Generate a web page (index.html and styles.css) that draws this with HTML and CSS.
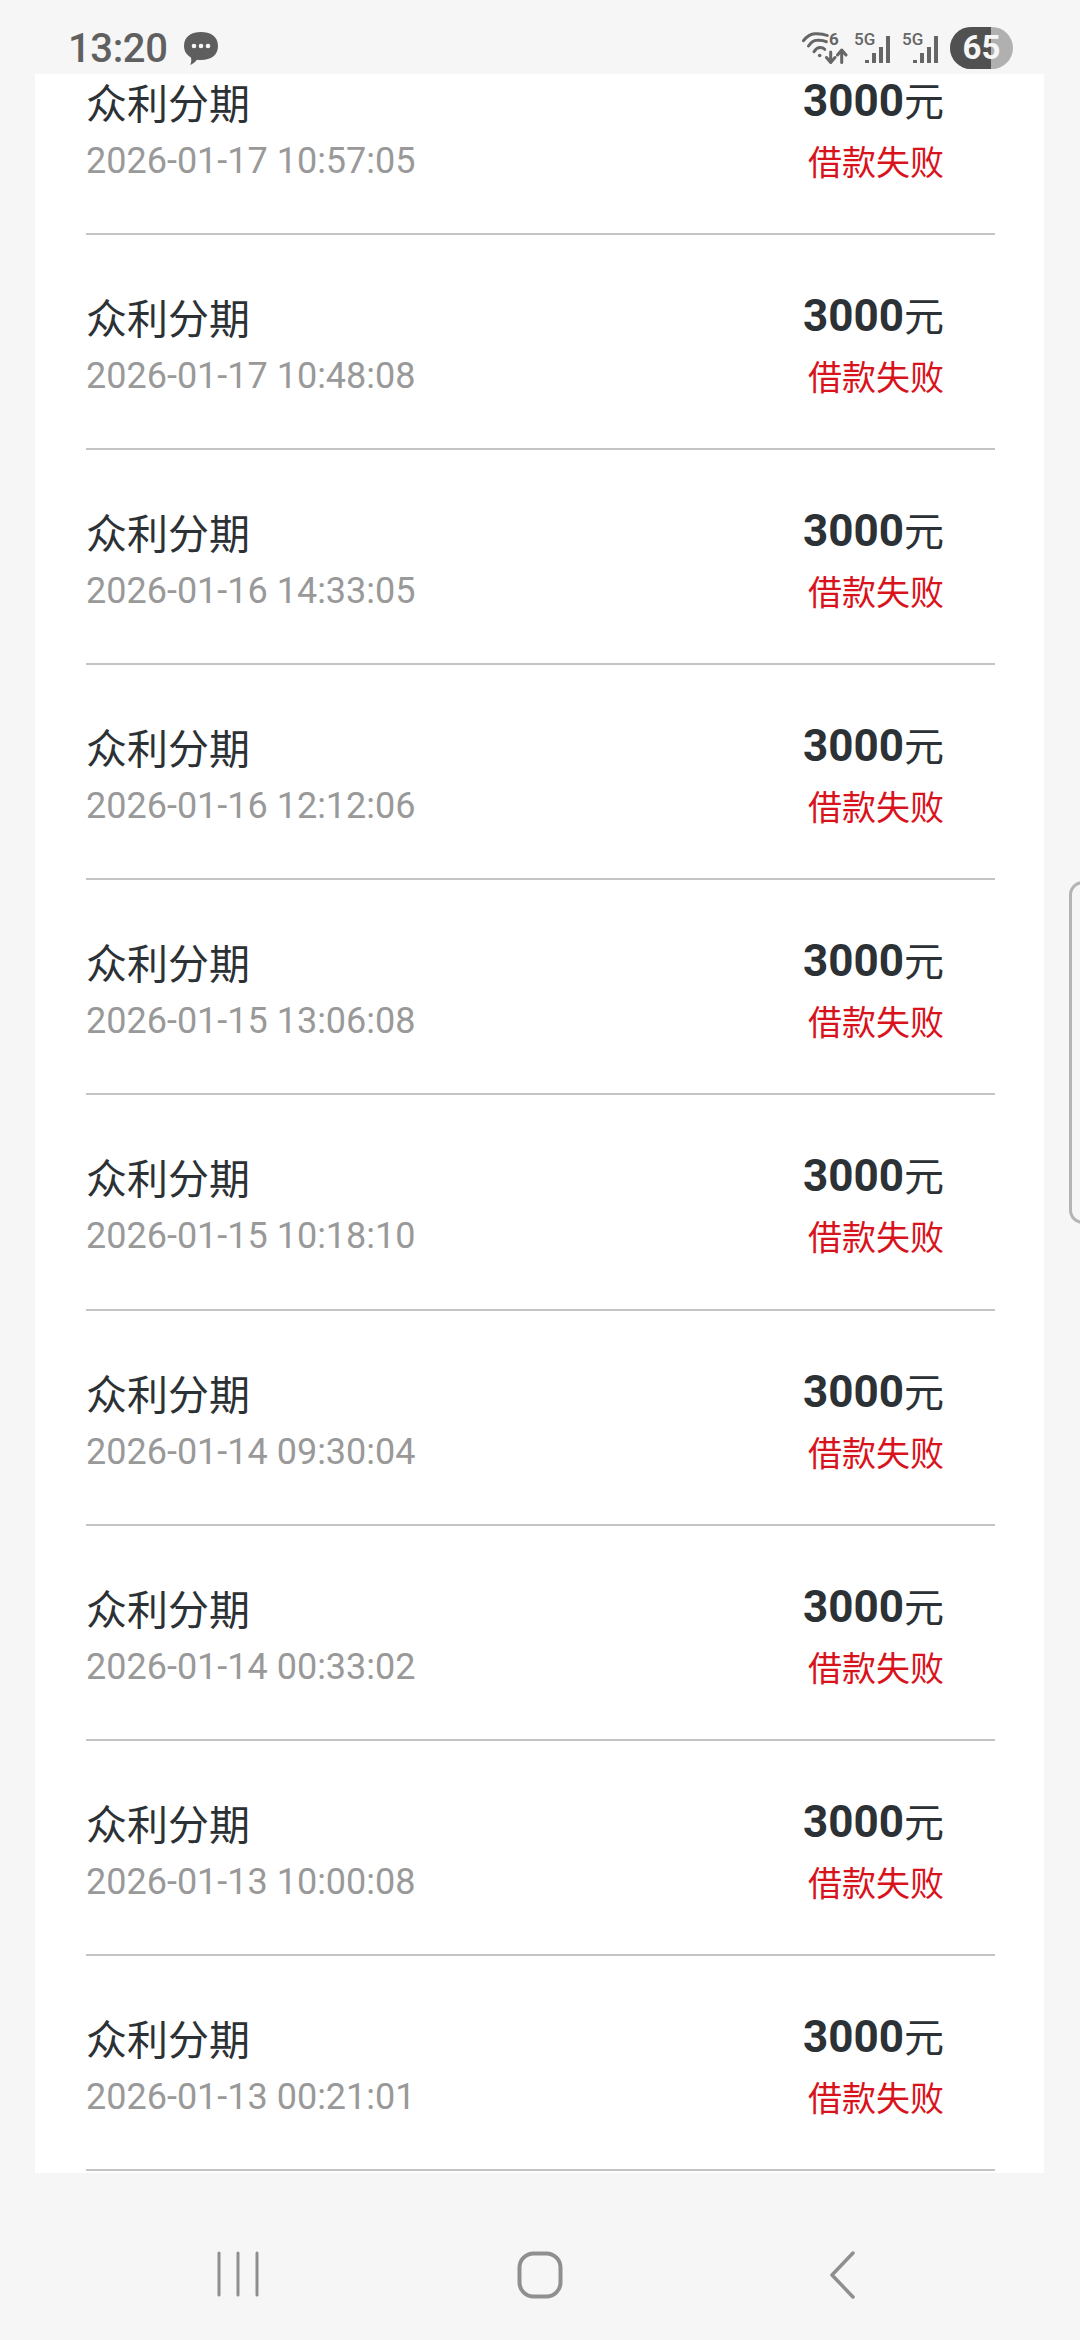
FILE: index.html
```html
<!DOCTYPE html>
<html lang="zh-CN">
<head>
<meta charset="utf-8">
<title>借款记录</title>
<link rel="stylesheet" href="styles.css">
</head>
<body>
<div class="screen">
  <header class="status">
    <div class="status-left">
      <span class="clock">13:20</span>
      <svg class="msg" width="36" height="36" viewBox="0 0 36 36"><path d="M18 1C27 1 35 5 35 15C35 24 28 29 18 29C16.500 29 15 29 14 28.800C12.500 31 10 33 7 34C8.500 31.500 8.500 29 8 26.500C3.500 24 1 20 1 15C1 5 9 1 18 1Z" fill="#5e5e5e"/><circle cx="11" cy="15" r="2.300" fill="#f6f6f6"/><circle cx="18" cy="15" r="2.300" fill="#f6f6f6"/><circle cx="25" cy="15" r="2.300" fill="#f6f6f6"/></svg>
    </div>
    <div class="status-right">
      <div class="wifi">
        <svg class="wifi-glyph" width="46" height="32" viewBox="0 0 46 32" fill="none" stroke="#666" stroke-width="3" stroke-linecap="round" stroke-linejoin="round"><path d="M1.500 8.700C5 4 9 1.800 13 1.700C18 1.500 22 2 25.300 3.500"/><path d="M6.500 14C9 10 12 8.300 15 8.200C18.500 8 22 8.500 24.300 9.700"/><path d="M12 19.700C14 16.500 16 15.500 18 15.500C20 15.500 21.500 16 22.700 17.300"/><circle cx="17.700" cy="23.500" r="1.800" fill="#666" stroke="none"/><path d="M28.700 20V30M24.500 25.500L28.700 30.500L33 25.500"/><path d="M39.700 30.500V18.500M35.500 23L39.700 18L44 23"/></svg>
        <span class="wifi-six">6</span>
      </div>
      <div class="signal">
        <span class="sig-label">5G</span>
        <div class="bars"><i class="b1"></i><i class="b2"></i><i class="b3"></i><i class="b4"></i></div>
      </div>
      <div class="signal">
        <span class="sig-label">5G</span>
        <div class="bars"><i class="b1"></i><i class="b2"></i><i class="b3"></i><i class="b4"></i></div>
      </div>
      <div class="battery"><div class="level"></div><span class="pct">65</span></div>
    </div>
  </header>
  <main class="card">
    <ul class="list">
      <li class="row"><div class="col"><span class="name">众利分期</span><span class="date">2026-01-17 10:57:05</span></div><div class="col end"><span class="amount"><b>3000</b>元</span><span class="state">借款失败</span></div></li>
      <li class="row"><div class="col"><span class="name">众利分期</span><span class="date">2026-01-17 10:48:08</span></div><div class="col end"><span class="amount"><b>3000</b>元</span><span class="state">借款失败</span></div></li>
      <li class="row"><div class="col"><span class="name">众利分期</span><span class="date">2026-01-16 14:33:05</span></div><div class="col end"><span class="amount"><b>3000</b>元</span><span class="state">借款失败</span></div></li>
      <li class="row"><div class="col"><span class="name">众利分期</span><span class="date">2026-01-16 12:12:06</span></div><div class="col end"><span class="amount"><b>3000</b>元</span><span class="state">借款失败</span></div></li>
      <li class="row"><div class="col"><span class="name">众利分期</span><span class="date">2026-01-15 13:06:08</span></div><div class="col end"><span class="amount"><b>3000</b>元</span><span class="state">借款失败</span></div></li>
      <li class="row"><div class="col"><span class="name">众利分期</span><span class="date">2026-01-15 10:18:10</span></div><div class="col end"><span class="amount"><b>3000</b>元</span><span class="state">借款失败</span></div></li>
      <li class="row"><div class="col"><span class="name">众利分期</span><span class="date">2026-01-14 09:30:04</span></div><div class="col end"><span class="amount"><b>3000</b>元</span><span class="state">借款失败</span></div></li>
      <li class="row"><div class="col"><span class="name">众利分期</span><span class="date">2026-01-14 00:33:02</span></div><div class="col end"><span class="amount"><b>3000</b>元</span><span class="state">借款失败</span></div></li>
      <li class="row"><div class="col"><span class="name">众利分期</span><span class="date">2026-01-13 10:00:08</span></div><div class="col end"><span class="amount"><b>3000</b>元</span><span class="state">借款失败</span></div></li>
      <li class="row"><div class="col"><span class="name">众利分期</span><span class="date">2026-01-13 00:21:01</span></div><div class="col end"><span class="amount"><b>3000</b>元</span><span class="state">借款失败</span></div></li>
    </ul>
  </main>
  <nav class="nav">
    <svg class="nav-icon" width="44" height="46" viewBox="0 0 44 46" fill="none" stroke="#8f8f8f" stroke-width="3" stroke-linecap="round"><path d="M3 2V44M22 2V44M41 2V44"/></svg>
    <svg class="nav-icon" width="46" height="48" viewBox="0 0 46 48" fill="none" stroke="#8f8f8f" stroke-width="4"><rect x="2.500" y="2.500" width="41" height="43" rx="14"/></svg>
    <svg class="nav-icon" width="26" height="48" viewBox="0 0 26 48" fill="none" stroke="#8f8f8f" stroke-width="3.500" stroke-linecap="round" stroke-linejoin="round"><path d="M24 2L3 24L24 46"/></svg>
  </nav>
  <div class="edge-handle"></div>
</div>
</body>
</html>
```

FILE: styles.css
```css
* { box-sizing: border-box; }
html, body { margin: 0; padding: 0; }
body { background: #f6f6f6; font-family: "Roboto", "Noto Sans CJK SC", sans-serif; }
.screen { position: relative; width: 1080px; height: 2340px; overflow: hidden; display: flex; flex-direction: column; }

.status { height: 74px; flex: none; display: flex; justify-content: space-between; align-items: flex-start; padding: 29px 67px 0 68px; }
.status-left { display: flex; align-items: center; gap: 15px; height: 40px; }
.clock { font-size: 40px; font-weight: 500; letter-spacing: -0.4px; color: #606060; line-height: 40px; }
.msg { display: block; }
.status-right { display: flex; align-items: flex-start; }
.wifi { position: relative; width: 46px; height: 32px; margin-top: 3px; margin-right: 6px; }
.wifi-glyph { display: block; }
.wifi-six { position: absolute; left: 27px; top: -1px; font-size: 17px; line-height: 17px; font-weight: 700; color: #666; }
.signal { position: relative; width: 48px; height: 32px; margin-top: 3px; }
.sig-label { position: absolute; left: 0; top: -3px; font-size: 17px; font-weight: 500; color: #666; line-height: 20px; }
.bars { position: absolute; right: 12px; bottom: 1px; display: flex; align-items: flex-end; gap: 3px; }
.bars i { display: block; width: 4px; background: #666; }
.b1 { height: 3px; }
.b2 { height: 10px; }
.b3 { height: 16px; }
.b4 { height: 27px; }
.battery { position: relative; width: 63px; height: 42px; margin-top: -2px; border-radius: 21px; background: #b0b0b0; overflow: hidden; text-align: center; }
.level { position: absolute; left: 0; top: 0; bottom: 0; width: 41px; background: #515151; }
.pct { position: relative; font-size: 33px; font-weight: 700; line-height: 42px; color: #f6f6f6; }

.card { flex: none; height: 2099px; margin: 0 36px 0 35px; background: #fff; overflow: hidden; }
.list { list-style: none; margin: -54px 0 0; padding: 0; }
.row { height: 215.100px; margin: 0 49px 0 51px; padding: 58px 51px 0 0; border-bottom: 2px solid #c4c4c4; display: flex; justify-content: space-between; align-items: flex-start; }
.col { display: flex; flex-direction: column; }
.end { align-items: flex-end; margin-top: -4px; }
.name { font-size: 41px; line-height: 54px; color: #2c3135; }
.date { font-size: 36px; line-height: 40px; margin-top: 9px; color: #999; }
.amount { font-size: 40px; line-height: 54px; color: #2c3135; }
.amount b { font-size: 44px; font-weight: 700; }
.state { font-size: 34px; line-height: 40px; margin-top: 13px; color: #d9131c; }

.nav { flex: 1; display: flex; align-items: flex-start; padding: 78px 0 0; }
.nav-icon { display: block; }
.nav-icon:nth-child(1) { margin-left: 216px; }
.nav-icon:nth-child(2) { margin-left: 257px; }
.nav-icon:nth-child(3) { margin-left: 266px; }

.edge-handle { position: absolute; left: 1069px; top: 881px; width: 30px; height: 343px; border: 3px solid #b4b4b4; border-radius: 14px; }
```
